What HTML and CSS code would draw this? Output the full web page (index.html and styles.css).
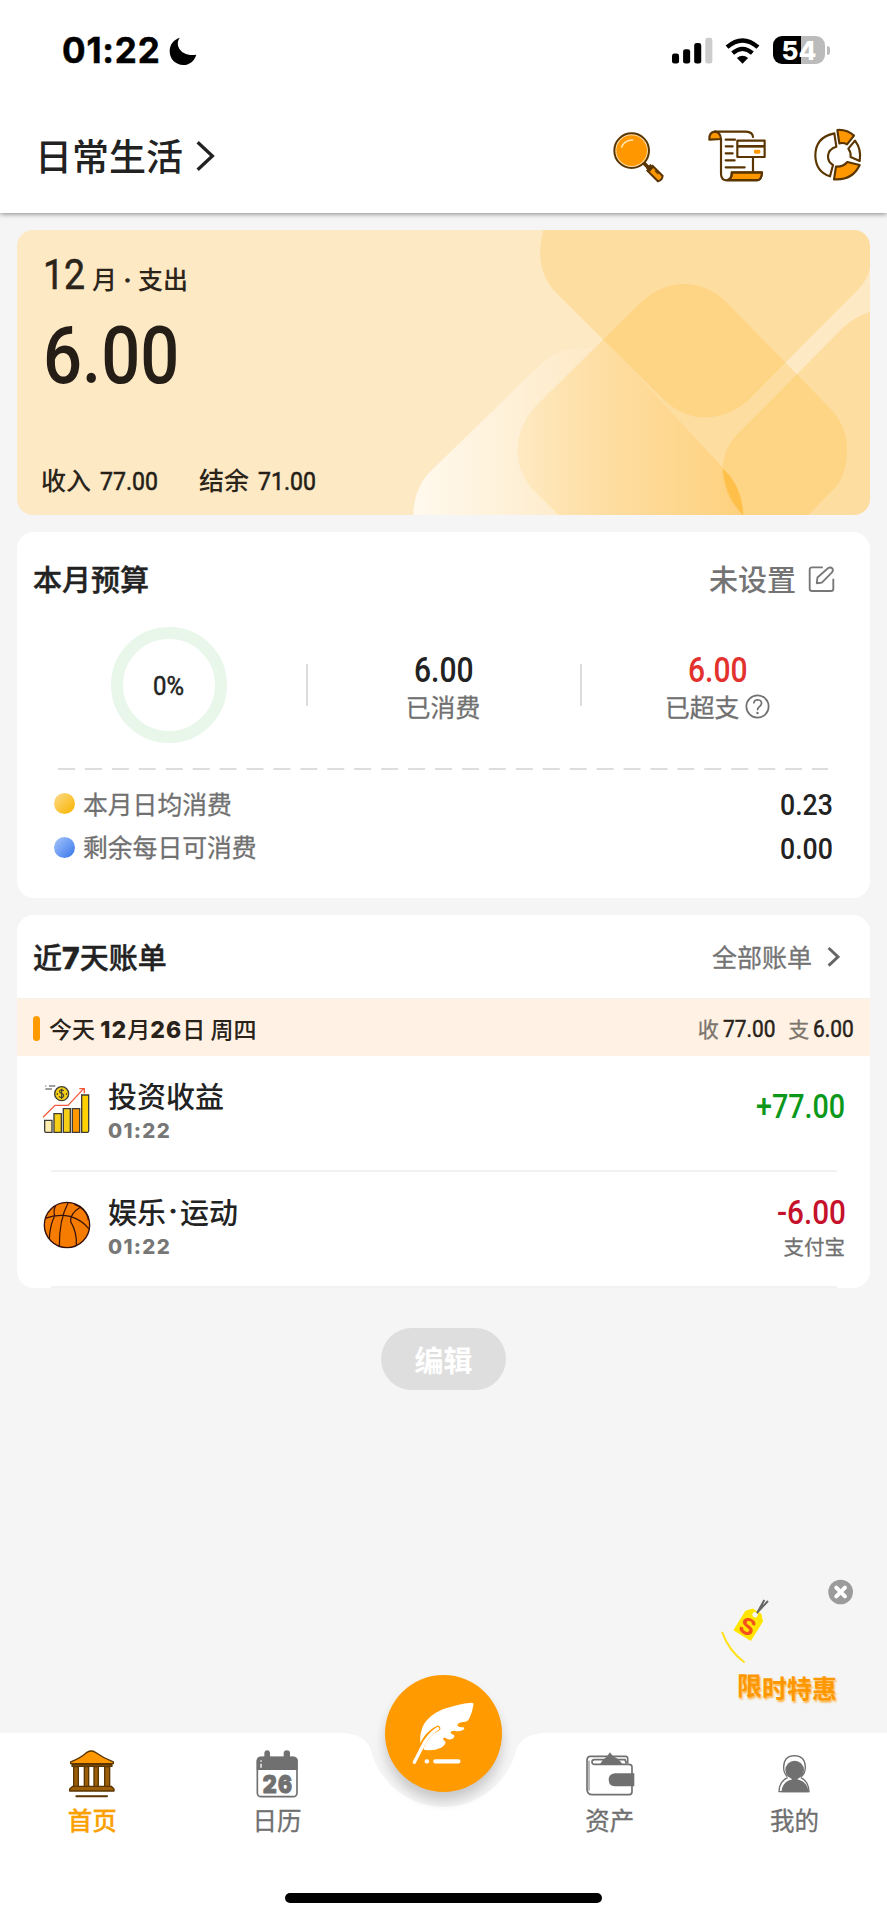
FILE: index.html
```html
<!DOCTYPE html>
<html lang="zh-CN">
<head>
<meta charset="utf-8">
<title>日常生活</title>
<link rel="stylesheet" href="styles.css">
</head>
<body>
<div class="app">
  <header class="top">
    <div class="status">
      <span class="clock">01:22</span>
      <svg class="moon" viewBox="508 108 84 84"><path d="M541 110C524 128 540 168 590 161C584 181 568 192 551 192C527 192 510 174 510 151C510 131 522 115 541 110Z"/></svg>
      <svg class="signal" viewBox="276 110 122 80"><rect x="276" y="159" width="21" height="30" rx="7"/><rect x="309" y="146" width="21" height="43" rx="7"/><rect x="342" y="128" width="21" height="61" rx="7"/><rect x="375" y="112" width="21" height="77" rx="7" fill="#ccc"/></svg>
      <svg class="wifi" viewBox="436 108 106 82"><g fill="none" stroke="#000" stroke-width="13"><path d="M442 139Q489 98 536 139"/><path d="M459 157Q489 131 519 157"/></g><path d="M489 189L472 172Q489 158 506 172Z"/></svg>
      <div class="battery"><span>54</span></div>
    </div>
    <div class="titlebar">
      <h1>日常生活</h1>
      <svg class="chev-lg" viewBox="588 418 58 96"><path d="M593 424L638 466L593 508" fill="none" stroke="#222" stroke-width="10"/></svg>
      <svg class="ic-search" viewBox="95 390 160 160"><path d="M190 488L203 502" stroke="#5a3500" stroke-width="11"/><path d="M201 512L217 498L247 528Q246 540 233 544Z" fill="#ff9800" stroke="#5a3500" stroke-width="6"/><path d="M197 505L210 492L221 502L208 516Z" fill="#5a3500"/><path d="M224 512L234 522" stroke="#5a3500" stroke-width="4"/><circle cx="154" cy="452" r="52" fill="#ffe3ad" stroke="#5a3500" stroke-width="6"/><circle cx="154" cy="452" r="46" fill="#ff9800"/><path d="M124 441Q132 421 157 420" fill="none" stroke="#ffe3ad" stroke-width="5" stroke-linecap="round"/></svg>
      <svg class="ic-bill" viewBox="382 388 180 160"><g stroke="#5a3500" stroke-width="6.5" stroke-linejoin="round" stroke-linecap="round" fill="none"><path d="M405 396H499Q519 397 520 412M424 418V524Q425 542 441 542H534Q546 540 547 518H456Q457 541 441 542M520 474V516"/><path d="M389 420Q388 397 406 396Q422 398 424 418Z" fill="#ff9800"/><path d="M457 519H547Q545 541 534 541H444Q457 538 457 519Z" fill="#ff9800"/><path d="M438 420H466M438 440H459M438 461H459M438 482H465M438 503H495"/><rect x="473" y="423" width="82" height="49" fill="#fff"/></g><path d="M473 436H555V444H473Z" fill="#5a3500"/><rect x="523" y="450" width="19" height="12" rx="4" fill="#ff9800"/></svg>
      <svg class="ic-pie" viewBox="698 382 150 162"><g stroke="#5a3500" stroke-width="6.5" fill="#fff" stroke-linejoin="round"><path d="M762 398Q704 410 705 466Q707 514 749 527L758 493Q742 484 743 465Q745 445 768 438Z"/><path d="M771 388Q800 386 821 405L800 431Q790 425 777 428Z" fill="#ff9800"/><path d="M824 420Q844 446 838 481L811 469Q812 454 804 444Z"/><path d="M767 498Q789 499 801 484L838 493Q816 540 761 536Z" fill="#ff9800"/></g></svg>
    </div>
  </header>

  <main>
    <section class="hero">
      <svg class="hero-art" viewBox="-1149 30 2559 855" preserveAspectRatio="none">
        <defs><linearGradient id="fade"><stop offset="0" stop-color="#fffaf0" stop-opacity=".95"/><stop offset=".3" stop-color="#fff8ea" stop-opacity=".5"/><stop offset=".6" stop-color="#fff4dd" stop-opacity="0"/><stop offset=".6" stop-color="#ffb93b" stop-opacity="0"/><stop offset="1" stop-color="#ffb93b" stop-opacity=".34"/></linearGradient></defs>
        <g fill="#ffbd40" fill-opacity=".28">
          <path d="M430 30C415 90 420 135 433 165Q445 197 480 230L795 542Q850 592 915 592Q985 590 1040 545L1375 208Q1402 180 1410 145V30Z"/>
          <path d="M850 192Q920 192 975 242L1290 565Q1342 620 1341 690Q1340 770 1300 808L1225 885H475L405 815Q353 765 353 690Q353 620 405 560L720 250Q775 195 850 192Z"/>
          <path d="M1410 275Q1365 290 1330 322L1015 640Q965 690 968 760Q975 840 1028 885H1410Z"/>
        </g>
        <path fill="url(#fade)" d="M40 885Q42 805 90 755L410 445Q465 388 535 386Q585 385 615 362L975 750Q1025 800 1030 885Z"/>
        <path fill="#ffb326" fill-opacity=".5" d="M968 746Q1025 796 1030 885Q975 830 968 746Z"/>
      </svg>
      <div class="hero-month"><span class="num month-no">12</span><span>月</span><em class="mid">·</em><span>支出</span></div>
      <div class="hero-total"><span class="num n4">6.00</span></div>
      <div class="hero-foot"><span>收入</span><span class="num n5">77.00</span><span class="second">结余</span><span class="num n5">71.00</span></div>
    </section>

    <section class="card budget">
      <div class="card-head"><h2>本月预算</h2><span class="unset">未设置</span>
        <svg class="ic-edit" viewBox="1092 106 80 80"><g fill="none" stroke="#777" stroke-width="5.500" stroke-linejoin="round"><path d="M1136 113H1104Q1097 113 1097 120V176Q1097 183 1104 183H1160Q1167 183 1167 176V147"/><path d="M1118 160L1120 143L1152 115Q1159 111 1164 116Q1168 121 1163 128L1133 158Z"/></g></svg>
      </div>
      <div class="stats">
        <div class="stat"><div class="ring"><span class="num pct">0%</span></div></div>
        <div class="stat"><span class="num n4 val">6.00</span><span class="lab">已消费</span></div>
        <div class="stat"><span class="num n4 val red">6.00</span><span class="lab">已超支
          <svg class="ic-help" viewBox="902 488 74 74"><g fill="none" stroke="#707070" stroke-width="5"><circle cx="939" cy="525" r="33"/><path d="M928 516Q929 505 940 505Q951 506 951 516Q950 522 944 526Q939 530 939 536"/></g><circle cx="939" cy="544" r="3.6" fill="#707070"/></svg></span></div>
      </div>
      <svg class="dash" viewBox="0 0 770 2"><path d="M0 1H770" stroke="#ddd" stroke-width="2" stroke-dasharray="17 9.93"/></svg>
      <div class="line"><i class="dot gold"></i><span class="name">本月日均消费</span><span class="num n4">0.23</span></div>
      <div class="line"><i class="dot blue"></i><span class="name">剩余每日可消费</span><span class="num n4">0.00</span></div>
    </section>

    <section class="card bills">
      <div class="card-head"><h2>近<b>7</b>天账单</h2><span class="all">全部账单</span>
        <svg class="chev-sm" viewBox="1148 122 40 64"><path d="M1153 128L1182 155L1153 182" fill="none" stroke="#666" stroke-width="9"/></svg>
      </div>
      <div class="day"><i></i><span class="date">今天 <b>12</b>月<b>26</b>日 周四</span><span class="tag">收</span><span class="num n5">77.00</span><span class="tag out">支</span><span class="num n4">6.00</span></div>
      <div class="entry">
        <svg class="ic-entry" viewBox="122 534 150 156"><g stroke="#3e3d38" stroke-width="4"><path d="M133 646H155V682H137Q133 682 133 677Z" fill="#ffeeb0"/><path d="M161 626H183V682H161Z" fill="#f7cf17"/><path d="M189 611H210V682H189Z" fill="#f7cf17"/><path d="M216 611H238V682H216Z" fill="#ff9800"/><path d="M244 570H265V678Q265 682 261 682H244Z" fill="#ffd000"/><circle cx="184" cy="566" r="21" fill="#f5cf16"/><path d="M135 543H138M146 543H165M135 552H155" stroke-width="3"/></g><path d="M190 558Q186 553 181 555Q174 560 182 565Q195 569 187 577Q180 579 176 574M184 551V582" fill="none" stroke="#3e3d38" stroke-width="3.4"/><circle cx="171" cy="567" r="2"/><circle cx="198" cy="567" r="2"/><path d="M128 637L164 601H203L250 551M237 551H252V565" fill="none" stroke="#f5593d" stroke-width="4"/></svg>
        <div class="what"><h3>投资收益</h3><time>01:22</time></div>
        <div class="sum plus"><span class="num n6">+77.00</span></div>
      </div>
      <div class="entry">
        <svg class="ic-entry" viewBox="122 882 150 156"><circle cx="200" cy="960" r="68" fill="#f57c00" stroke="#35110d" stroke-width="4"/><g fill="none" stroke="#35110d" stroke-width="3.6"><path d="M134 940Q172 926 209 934Q246 945 266 972M203 894Q176 945 177 1026M166 902Q158 916 163 933Q149 960 147 1001M241 906Q209 925 211 950Q230 982 228 1020M222 898Q239 903 250 915Q263 930 264 946"/></g></svg>
        <div class="what"><h3><span>娱乐</span><em class="mid">·</em><span>运动</span></h3><time>01:22</time></div>
        <div class="sum minus"><span class="num nm">-6.00</span><small>支付宝</small></div>
      </div>
    </section>

    <button class="edit">编辑</button>
  </main>

  <aside class="promo">
    <svg class="promo-art" viewBox="50 50 430 280">
      <g transform="translate(170 162) rotate(32)"><path d="M-31 79V10L-16-7H15L31 10V79Z" fill="#ffe500"/><circle r="8" fill="#f5f5f5" cx="0" cy="5"/></g>
      <path d="M173 162L195 122M175 158L206 125" stroke="#666" stroke-width="6"/>
      <text x="122" y="226" transform="rotate(24 145 201)" font-family="Inter" font-weight="700" font-size="68" fill="#f4511e" textLength="46" lengthAdjust="spacingAndGlyphs">S</text>
      <path d="M69 220Q89 275 134 308" fill="none" stroke="#ffe11b" stroke-width="6" stroke-linecap="round"/>
      <circle cx="424" cy="98" r="37" fill="#9b9b9b"/><path d="M411 85L437 111M437 85L411 111" stroke="#fff" stroke-width="12" stroke-linecap="round"/>
    </svg>
    <div class="promo-text"><span class="up">限</span><span>时特惠</span></div>
  </aside>

  <nav class="tabs">
    <svg class="tab-bg" viewBox="0 0 887 187"><path d="M0 0H343Q364 1 370.500 16A75 75 0 0 0 516.500 16Q523 1 544 0H887V187H0Z" fill="#fff"/></svg>
    <a class="tab on"><svg viewBox="205 262 150 154"><g fill="#9b5d08" stroke="#5a3500" stroke-width="4" stroke-linejoin="round"><path d="M216 304Q245 293 265 275Q278 267 290 275Q315 293 344 304V309H216Z" fill="#ff9800"/><path d="M220 312H340V317H220Z"/><path d="M225 318H239V378H225ZM257 318H270V378H257ZM286 318H299V378H286ZM318 318H333V378H318Z"/><path d="M213 385L222 377H338L346 385V391H213Z"/></g><path d="M233 407H325" stroke="#5a3500" stroke-width="6" stroke-linecap="round"/></svg><span>首页</span></a>
    <a class="tab"><svg viewBox="755 262 150 154"><rect x="771" y="290" width="119" height="118" rx="11" fill="#fff" stroke="#707070" stroke-width="5"/><path d="M769 328V301Q769 288 782 288H792V276Q793 269 801 269Q808 269 809 276V288H850V276Q851 269 859 269Q868 269 869 276V288H880Q892 289 892 301V328Z" fill="#707070"/><path d="M782 299V303M782 309V321" stroke="#fff" stroke-width="4"/><g font-family="Inter" font-weight="900" font-size="74" fill="#707070" stroke="#707070" stroke-width="3" stroke-linejoin="round"><text x="787" y="396" textLength="42" lengthAdjust="spacingAndGlyphs">2</text><text x="833" y="396" textLength="42" lengthAdjust="spacingAndGlyphs">6</text></g></svg><span>日历</span></a>
    <div class="tab-gap"></div>
    <a class="tab"><svg viewBox="425 262 150 154"><g fill="none" stroke="#707070" stroke-width="5"><path d="M553 308V293Q553 287 547 287H440Q431 288 431 299V387Q432 402 447 402H558Q566 401 566 393V318Q565 311 557 311H454Q446 311 446 304Q446 297 453 297H545L549 308"/><path d="M437 300V390" stroke-width="3"/></g><path d="M470 311Q478 295 490 288L500 275L510 288Q527 293 538 312Z" fill="#707070"/><path d="M573 338H514Q496 340 496 357Q497 376 514 377H573Z" fill="#707070"/></svg><span>资产</span></a>
    <a class="tab"><svg viewBox="977 262 150 154"><path d="M1032 348Q1020 337 1021 318Q1022 286 1053 285Q1085 286 1086 318Q1086 338 1074 348" fill="#fff" stroke="#707070" stroke-width="4"/><circle cx="1054" cy="328" r="28" fill="#707070"/><path d="M1046 350H1063V362H1046ZM1014 395Q1018 357 1054 356Q1091 357 1096 395Z" fill="#707070"/><path d="M1033 351Q1007 362 1007 393H1097Q1096 361 1072 351" fill="none" stroke="#707070" stroke-width="4"/></svg><span>我的</span></a>
    <button class="fab"><svg viewBox="1232 120 200 200"><path d="M1263 250C1260 190 1290 166 1332 147C1360 138 1390 130 1416 128Q1424 128 1422 135Q1418 162 1407 180Q1404 185 1397 185Q1374 187 1374 195Q1375 202 1392 202Q1398 205 1391 210Q1378 216 1365 212Q1353 212 1354 218Q1357 223 1364 225Q1368 231 1358 237Q1347 241 1338 233Q1329 232 1332 239L1339 246Q1337 257 1325 263Q1302 274 1274 269Z" fill="#fff"/><path d="M1242 315L1265 262Q1283 220 1315 205" fill="none" stroke="#ff9a00" stroke-width="16" stroke-linecap="round"/><path d="M1245 307L1268 262Q1285 225 1315 206" fill="none" stroke="#fff" stroke-width="10" stroke-linecap="round"/><path d="M1282 304H1283M1308 304H1377" stroke="#fff" stroke-width="13" stroke-linecap="round"/></svg></button>
    <i class="home-bar"></i>
  </nav>
</div>
</body>
</html>
```
FILE: styles.css
```css
* { box-sizing: border-box; }
body { margin: 0; background: #f5f5f5; font-family: "Noto Sans CJK SC", sans-serif; color: #222; }
h1, h2, h3 { margin: 0; font-weight: 500; }
button { border: 0; padding: 0; font: inherit; }
svg { display: block; flex: none; }
.app { position: relative; width: 887px; height: 1920px; display: flex; flex-direction: column; overflow: hidden; }

/* Condensed figures: width is the scaled advance of the string */
.num { font-family: Roboto, sans-serif; font-weight: 500; display: inline-block; white-space: nowrap; transform: scaleX(.87); transform-origin: 0 50%; }
.n4 { width: 1.7em; }
.n5 { width: 2.19em; }
.n6 { width: 2.68em; }
.nm { width: 2.04em; }
.mid { font-family: Roboto, sans-serif; font-style: normal; display: inline-block; text-align: center; -webkit-text-stroke: 1px; }

.top { height: 213px; flex: none; background: #fff; box-shadow: 0 1px 5px rgba(0,0,0,.45); position: relative; }
.status { height: 100px; display: flex; align-items: center; padding: 0 62px 0 62px; }
.clock { font: 700 35px/40px Inter, sans-serif; width: 107px; color: #000; letter-spacing: .8px; white-space: nowrap; -webkit-text-stroke: .5px; }
.moon { width: 28px; height: 28px; margin-top: 1px; }
.signal { width: 41px; height: 27px; margin-left: auto; }
.wifi { width: 35px; height: 27px; margin: 0 13px 0 12px; }
.battery { position: relative; width: 52px; height: 28px; border-radius: 9px; background: linear-gradient(90deg, #000 54%, #bbb 54%); text-align: center; }
.battery span { font: 800 26px/29px Inter, sans-serif; color: #fff; }
.battery::after { content: ""; position: absolute; left: 54px; top: 10px; width: 3px; height: 9px; border-radius: 0 4px 4px 0; background: #bbb; }
.titlebar { height: 113px; display: flex; align-items: center; padding: 0 24px 0 35px; }
.titlebar h1 { font-size: 37px; line-height: 50px; margin-top: -4px; }
.chev-lg { width: 19px; height: 32px; margin: -2px auto 0 13px; }
.ic-search { width: 53.300px; height: 53.300px; margin: 0 43px 0 0; }
.ic-bill { width: 60px; height: 53.300px; margin: -1px 46px 0 -1px; }
.ic-pie { width: 50px; height: 54px; margin-top: -4px; }

main { flex: 1; padding: 17px 17px 0; display: flex; flex-direction: column; }
.hero { position: relative; height: 285px; border-radius: 16px; overflow: hidden; background: #fee9c5; padding: 15px 26px 0; color: #2b241a; font-weight: 500; }
.hero-art { position: absolute; inset: 0; width: 853px; height: 285px; }
.hero-month { position: relative; height: 76px; display: flex; align-items: baseline; font-size: 25px; line-height: 50px; }
.hero-month .mid { width: 21px; }
.month-no { font-size: 43px; line-height: 58px; width: 49px; font-weight: 400; -webkit-text-stroke: .6px; }
.hero-total { position: relative; height: 143px; font-size: 79px; line-height: 70px; color: #241e17; }
.hero-total .num { line-height: 70px; display: block; }
.hero-foot { position: relative; display: flex; align-items: baseline; font-size: 25px; line-height: 30px; margin-left: -2px; }
.hero-foot .num { font-size: 26.500px; margin-left: 9px; color: #241e17; font-weight: 400; -webkit-text-stroke: .6px; }
.hero-foot .second { margin-left: 41px; }

.card { margin-top: 17px; border-radius: 17px; background: #fff; flex: none; }
.card-head { display: flex; align-items: center; padding: 0 17px 0 16px; }
.card-head h2 { font-size: 29px; line-height: 40px; font-weight: 500; margin: -2px auto 0 0; -webkit-text-stroke: .4px; }
.card-head h2 b { font: 800 30px/30px Inter, sans-serif; }
.budget { height: 366px; }
.budget .card-head { height: 94px; padding-right: 35px; }
.unset { font-size: 29px; line-height: 40px; color: #747474; font-weight: 500; margin-top: -2px; }
.ic-edit { width: 27px; height: 27px; margin: -1px 0 0 12px; }
.stats { display: grid; grid-template-columns: 1fr 1fr 1fr; height: 142px; padding: 0 15px 0 14px; }
.stat { position: relative; display: flex; flex-direction: column; align-items: center; padding-top: 24px; }
.stat + .stat::before { content: ""; position: absolute; left: 0; top: 38px; width: 2px; height: 42px; background: #ddd; }
.stat:first-child { padding-top: 1px; }
.ring { width: 116px; height: 116px; border: 12.500px solid #e9f6ea; border-radius: 50%; display: flex; align-items: center; justify-content: center; margin-left: 2px; }
.pct { font-size: 26px; font-weight: 400; width: 32px; margin-top: 2px; transform: scaleX(.92); -webkit-text-stroke: .5px; }
.val { font-size: 34.500px; line-height: 41px; }
.red { color: #e3322d; }
.lab { display: flex; align-items: center; gap: 6px; font-size: 24.800px; line-height: 30px; color: #707070; -webkit-text-stroke: .3px; }
.ic-help { width: 25px; height: 25px; margin-top: 1px; }
.dash { width: 770px; height: 2px; margin: 0 0 13px 41px; }
.line { display: flex; align-items: center; height: 43.500px; padding: 0 38px 0 37px; font-size: 24.800px; color: #707070; }
.line .name { margin-top: -4px; -webkit-text-stroke: .3px; }
.line .num { margin-left: auto; font-size: 29px; color: #222; transform: scaleX(.92); width: 1.81em; margin-top: 1px; }
.dot { width: 21px; height: 21px; border-radius: 50%; margin: -2px 8px 0 0; }
.gold { background: linear-gradient(135deg, #fcdb8d, #f9b90f 85%); }
.blue { background: linear-gradient(135deg, #a8c7fb, #3b78ec 95%); }

.bills { height: 373px; overflow: hidden; }
.bills .card-head { height: 83px; padding-right: 30px; }
.all { font-size: 25px; line-height: 36px; color: #747474; margin-top: -1px; -webkit-text-stroke: .3px; }
.chev-sm { width: 13px; height: 21px; margin: -1px 0 0 15px; }
.day { height: 58px; background: #fff2e4; border-top: 1px solid #f4f1ed; display: flex; align-items: center; padding: 1px 16px 0; font-size: 23px; color: #28221a; }
.day i { width: 7px; height: 25px; border-radius: 4px; background: #ff9a00; margin: 1px 9px 0 0; }
.date { margin-right: auto; font-weight: 500; white-space: pre; }
.date b { font-family: Inter, sans-serif; font-weight: 800; font-size: 23px; letter-spacing: 1.1px; }
.day .num { font-size: 24px; font-weight: 400; margin: 1px 0 0 4px; -webkit-text-stroke: .5px; }
.tag { font-size: 21px; color: #7c756d; -webkit-text-stroke: .3px; }
.out { margin-left: 13px; }
.entry { position: relative; height: 116px; display: flex; padding: 0 26px 0 24px; }
.entry::after { content: ""; position: absolute; left: 34px; right: 33px; bottom: 0; height: 2px; background: #f2f2f2; }
.ic-entry { width: 50px; height: 52px; margin-top: 27px; }
.what { margin: 19px auto 0 17px; }
.what h3 { display: flex; font-size: 29px; line-height: 40px; }
.what .mid { width: 14px; }
.what time { display: block; font: 800 20.500px/32px Inter, sans-serif; color: #777; letter-spacing: 1.3px; }
.sum { display: flex; flex-direction: column; align-items: flex-end; }
.sum .num { line-height: 40px; }
.plus { padding-top: 31px; font-size: 33px; color: #0c981b; }
.minus { padding-top: 21px; font-size: 33px; color: #c5112a; }
.minus .num { transform: scaleX(.9); }
.sum small { font-size: 20.500px; line-height: 28px; color: #707070; margin: -1px -1px 0 0; -webkit-text-stroke: .3px; }

.edit { margin: 40px auto 0; width: 125px; height: 62px; border-radius: 31px; background: #dedede; color: #fff; font-size: 29px; font-weight: 700; line-height: 58px; }

.promo { position: absolute; left: 716px; top: 1576px; width: 144px; }
.promo-art { width: 143.300px; height: 93.300px; }
.promo-text { display: flex; margin: 0 0 0 21px; font-size: 25px; line-height: 36px; font-weight: 700; color: #ff9800; text-shadow: 1px 2px 2px #ffb54a; }
.promo-text .up { margin-top: -3px; }

.tabs { position: relative; flex: none; height: 187px; display: flex; }
.tab-bg { position: absolute; left: 0; top: 0; width: 887px; height: 187px; }
.tab { position: relative; width: 184.700px; display: flex; flex-direction: column; align-items: center; padding-top: 15px; color: #707070; font-size: 24.500px; line-height: 34px; -webkit-text-stroke: .3px; }
.tab svg { width: 50px; height: 51.300px; }
.tab span { margin-top: 4px; }
.on { color: #faa000; font-weight: 500; }
.tab-gap { width: 148px; }
.fab { position: absolute; left: 385px; top: -58px; width: 117px; height: 117px; border-radius: 50%; background: #ff9a00; box-shadow: 0 9px 12px rgba(0,0,0,.18); display: flex; align-items: center; justify-content: center; }
.fab svg { width: 66.700px; height: 66.700px; }
.home-bar { position: absolute; left: 285px; top: 160px; width: 317px; height: 10px; border-radius: 5px; background: #000; }
```
